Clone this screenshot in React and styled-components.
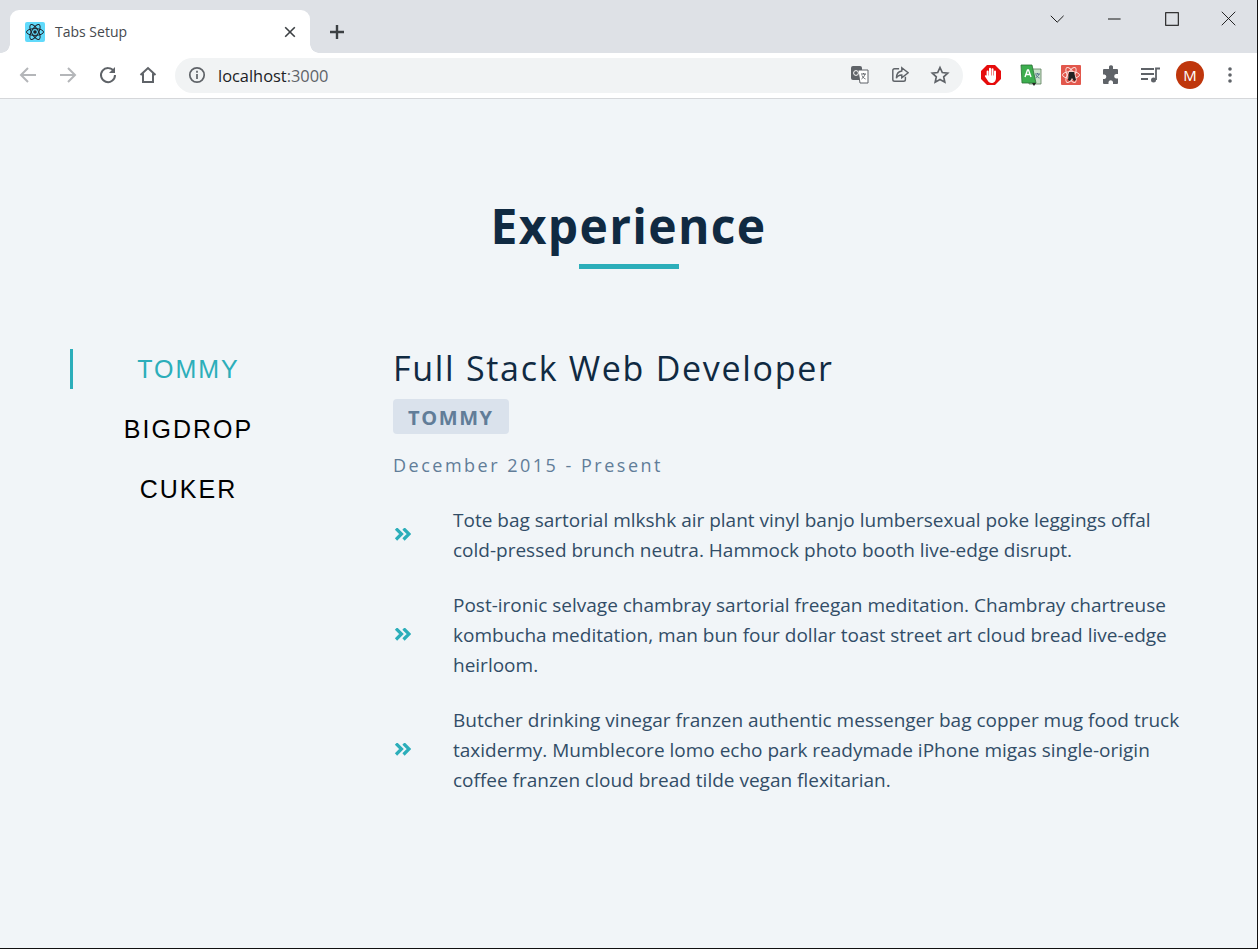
import React from 'react';
import styled, { createGlobalStyle } from 'styled-components';

const contentFont = '"Open Sans", "Noto Sans", sans-serif';

const GlobalStyle = createGlobalStyle`
  html, body {
    margin: 0;
    padding: 0;
    background: #f1f5f8;
  }
  * {
    box-sizing: border-box;
  }
`;

const Page = styled.div`
  height: 949px;
  display: flex;
  flex-direction: column;
  background: #f1f5f8;
  border-bottom: 1px solid #111;
  border-right: 1px solid #111;
  overflow: hidden;
`;

/* browser chrome */
const TabStrip = styled.div`
  height: 53px;
  flex: none;
  display: flex;
  align-items: flex-start;
  background: #dee1e6;
  padding: 10px 0 0 10px;
`;
const BrowserTab = styled.div`
  position: relative;
  width: 300px;
  height: 43px;
  display: flex;
  align-items: center;
  padding: 0 12px 0 15px;
  background: #fff;
  border-radius: 9px 9px 0 0;
  &::before,
  &::after {
    content: '';
    position: absolute;
    bottom: 0;
    width: 9px;
    height: 9px;
  }
  &::before {
    left: -9px;
    background: radial-gradient(circle at 0 0, #dee1e6 8.5px, #fff 9px);
  }
  &::after {
    right: -9px;
    background: radial-gradient(circle at 100% 0, #dee1e6 8.5px, #fff 9px);
  }
`;
const TabTitle = styled.span`
  flex: 1;
  margin-left: 10px;
  font: 14px "Open Sans", sans-serif;
  color: #45494e;
`;
const NewTab = styled.div`
  width: 28px;
  height: 28px;
  margin: 8px 0 0 13px;
  display: flex;
  align-items: center;
  justify-content: center;
`;
const WindowControls = styled.div`
  margin: -10px 0 0 auto;
  display: flex;
`;
const WindowButton = styled.div`
  width: 57px;
  height: 37px;
  display: flex;
  align-items: center;
  justify-content: center;
`;
const Toolbar = styled.div`
  height: 46px;
  flex: none;
  display: flex;
  align-items: center;
  background: #fff;
  border-bottom: 1px solid #d5d7da;
  padding: 0 8px 1px 8px;
`;
const NavButton = styled.div`
  width: 40px;
  height: 28px;
  flex: none;
  display: flex;
  align-items: center;
  justify-content: center;
`;
const AvatarSlot = styled(NavButton)`
  width: 38px;
  margin-right: 1px;
`;
const Omnibox = styled.div`
  width: 788px;
  height: 35px;
  margin: 0 8px 0 7px;
  padding: 0 3px 0 13px;
  flex: none;
  display: flex;
  align-items: center;
  background: #f1f3f4;
  border-radius: 18px;
`;
const Url = styled.span`
  flex: 1;
  margin-left: 12px;
  font: 16.4px "Open Sans", sans-serif;
  color: #202124;
  span {
    color: #5f6368;
  }
`;
const OmniIcon = styled.div`
  width: 40px;
  display: flex;
  justify-content: center;
`;
const Avatar = styled.div`
  width: 28px;
  height: 28px;
  border-radius: 50%;
  background: #bf360c;
  color: #fff;
  font: 15px "Open Sans", sans-serif;
  display: flex;
  align-items: center;
  justify-content: center;
`;

/* page content */
const Section = styled.section`
  padding: 96px 70px 0;
  font-family: ${contentFont};
`;
const Title = styled.div`
  text-align: center;
  margin-bottom: 80px;
`;
const Heading = styled.h2`
  margin: 0;
  font-size: 48px;
  line-height: 62px;
  font-weight: 700;
  letter-spacing: 1.3px;
  color: #102a42;
`;
const Underline = styled.div`
  width: 100px;
  height: 5px;
  margin: 7px auto 0;
  background: #2caeba;
`;
const Columns = styled.div`
  display: grid;
  grid-template-columns: 234px 1fr;
  column-gap: 89px;
`;
const TabList = styled.div`
  display: flex;
  flex-direction: column;
  gap: 20px;
`;
const TabButton = styled.button`
  height: 40px;
  padding: 0;
  background: transparent;
  border: 0;
  border-left: 3px solid ${({ $active }) => ($active ? '#2caeba' : 'transparent')};
  font: 25px "Liberation Sans", Arial, sans-serif;
  letter-spacing: 2px;
  color: ${({ $active }) => ($active ? '#2caeba' : '#000')};
`;
const Article = styled.article`
  min-width: 0;
`;
const JobTitle = styled.h3`
  margin: 0;
  font-size: 34px;
  line-height: 38px;
  font-weight: 400;
  letter-spacing: 1.7px;
  color: #102a42;
`;
const Company = styled.h4`
  display: inline-block;
  margin: 12px 0 0;
  padding: 0 15px;
  height: 35px;
  line-height: 37px;
  font-size: 20px;
  font-weight: 700;
  letter-spacing: 1.6px;
  color: #617d98;
  background: #dae2ec;
  border-radius: 4px;
`;
const Dates = styled.p`
  margin: 16px 0 0;
  font-size: 18px;
  line-height: 30px;
  letter-spacing: 2.5px;
  color: #617d98;
`;
const Duties = styled.div`
  margin-top: 25px;
  display: flex;
  flex-direction: column;
  gap: 25px;
`;
const Duty = styled.div`
  display: grid;
  grid-template-columns: 60px 1fr;
  align-items: center;
`;
const DutyText = styled.p`
  margin: 0;
  font-size: 19px;
  line-height: 30px;
  color: #324d67;
`;

const ReactFavicon = () => (
  <svg width="20" height="20" viewBox="0 0 20 20">
    <rect width="20" height="20" rx="2" fill="#61dafb" />
    <g fill="none" stroke="#20232a" strokeWidth="1">
      <ellipse cx="10" cy="10" rx="8.5" ry="3.4" />
      <ellipse cx="10" cy="10" rx="8.5" ry="3.4" transform="rotate(60 10 10)" />
      <ellipse cx="10" cy="10" rx="8.5" ry="3.4" transform="rotate(120 10 10)" />
    </g>
    <circle cx="10" cy="10" r="1.8" fill="#20232a" />
  </svg>
);

const DoubleChevron = () => (
  <svg width="18" height="14" viewBox="0 0 18 14" fill="none" stroke="#2caeba" strokeWidth="3.2">
    <path d="M3 .5L8.500 6 3 11.500M10.500 .5L16 6l-5.500 5.500" />
  </svg>
);

const Glyph = ({ size = 20, color = '#5f6368', width = 2, children }) => (
  <svg width={size} height={size} viewBox="0 0 20 20" fill="none" stroke={color} strokeWidth={width}>
    {children}
  </svg>
);

const duties = [
  'Tote bag sartorial mlkshk air plant vinyl banjo lumbersexual poke leggings offal cold-pressed brunch neutra. Hammock photo booth live-edge disrupt.',
  'Post-ironic selvage chambray sartorial freegan meditation. Chambray chartreuse kombucha meditation, man bun four dollar toast street art cloud bread live-edge heirloom.',
  'Butcher drinking vinegar franzen authentic messenger bag copper mug food truck taxidermy. Mumblecore lomo echo park readymade iPhone migas single-origin coffee franzen cloud bread tilde vegan flexitarian.',
];

const App = () => (
  <Page>
    <GlobalStyle />
    <TabStrip>
      <BrowserTab>
        <ReactFavicon />
        <TabTitle>Tabs Setup</TabTitle>
        <Glyph size={16} color="#3c4043">
          <path d="M4 4l12 12M16 4L4 16" />
        </Glyph>
      </BrowserTab>
      <NewTab>
        <Glyph color="#3c4043" width={2.4}>
          <path d="M10 3v14M3 10h14" />
        </Glyph>
      </NewTab>
      <WindowControls>
        <WindowButton>
          <Glyph size={16} color="#111" width={1.2}>
            <path d="M1 6l8 8 8-8" />
          </Glyph>
        </WindowButton>
        <WindowButton>
          <Glyph size={14} color="#111" width={1.4}>
            <path d="M0 10h18" />
          </Glyph>
        </WindowButton>
        <WindowButton>
          <Glyph size={14} color="#111" width={1.5}>
            <rect x="1" y="1" width="18" height="18" />
          </Glyph>
        </WindowButton>
        <WindowButton>
          <Glyph size={15} color="#111" width={1.2}>
            <path d="M1 1l18 18M19 1L1 19" />
          </Glyph>
        </WindowButton>
      </WindowControls>
    </TabStrip>
    <Toolbar>
      <NavButton>
        <Glyph color="#b4b6b9">
          <path d="M18 10H3M10 3l-7 7 7 7" />
        </Glyph>
      </NavButton>
      <NavButton>
        <Glyph color="#b4b6b9">
          <path d="M2 10h15M10 3l7 7-7 7" />
        </Glyph>
      </NavButton>
      <NavButton>
        <Glyph>
          <path d="M16 6.500A7 7 0 1 0 17 10" />
          <path d="M17 2v6h-6" fill="#5f6368" stroke="none" />
        </Glyph>
      </NavButton>
      <NavButton>
        <Glyph>
          <path d="M2.500 10L10 3l7.500 7M5 8.500V17h10V8.500" />
        </Glyph>
      </NavButton>
      <Omnibox>
        <Glyph size={18} width={1.9}>
          <circle cx="10" cy="10" r="8" />
          <path d="M10 9v5.500M10 5.200v2.200" />
        </Glyph>
        <Url>
          localhost<span>:3000</span>
        </Url>
        <OmniIcon>
          <svg width="20" height="20" viewBox="0 0 20 20">
            <rect x="1" y="1" width="11" height="14" rx="2" fill="#5f6368" />
            <path d="M8 5h10v13H10z" fill="#fff" stroke="#5f6368" />
            <path d="M11 9h5M13.500 8v1M15 9c-.5 2-2 4-3.500 5M12 10.500c.7 1.500 2 3 3.500 3.500" stroke="#5f6368" fill="none" />
            <circle cx="6" cy="8" r="2.400" fill="none" stroke="#fff" />
          </svg>
        </OmniIcon>
        <OmniIcon>
          <Glyph size={18} width={1.6}>
            <path d="M9 3H4a2 2 0 0 0-2 2v10a2 2 0 0 0 2 2h10a2 2 0 0 0 2-2v-3" />
            <path d="M12 2l7 5.500-7 5.500V10c-3 0-5 1-6 3.500C6 9 8 6 12 5.500z" />
          </Glyph>
        </OmniIcon>
        <OmniIcon>
          <Glyph size={20} width={1.7}>
            <path d="M10 2.500l2.300 5 5.400.6-4 3.700 1.100 5.400L10 14.500l-4.800 2.700 1.100-5.400-4-3.700 5.400-.6z" />
          </Glyph>
        </OmniIcon>
      </Omnibox>
      <NavButton>
        <svg width="22" height="22" viewBox="0 0 22 22">
          <path d="M7 1h8l6 6v8l-6 6H7l-6-6V7z" fill="#e60c0c" />
          <path d="M6.500 11.500h9.500V14c0 3-2 5-4.500 5-2 0-3-1-4-2.800L5 12.500c-.6-1 .8-1.800 1.500-1z" fill="#fff" />
          <path d="M7.600 12V7.500M10 12V4.800M12.500 12V5.300M15 12.500V7.500" stroke="#fff" strokeWidth="2" strokeLinecap="round" />
        </svg>
      </NavButton>
      <NavButton>
        <svg width="22" height="22" viewBox="0 0 22 22">
          <path d="M9 5h12v15H9z" fill="#c8e0c8" stroke="#5a7d5a" strokeWidth="0.8" />
          <path d="M1 1h11l4 18H2z" fill="#3cae4e" stroke="#2a6f35" strokeWidth="0.8" />
          <path d="M12 19l2 3 2-3z" fill="#222" />
          <path d="M5 13l2.500-7h1L11 13M6 10.500h4" stroke="#fff" strokeWidth="1.400" fill="none" />
          <path d="M15 10h5M17.500 9v1M19 10c-.5 2-2 3-3.500 4M16 11c.7 1.500 2 2.500 3.500 3" stroke="#55708a" fill="none" />
        </svg>
      </NavButton>
      <NavButton>
        <svg width="20" height="20" viewBox="0 0 20 20">
          <rect width="20" height="20" rx="1" fill="#e2574c" />
          <g fill="none" stroke="#fbdcd8" strokeWidth="1">
            <ellipse cx="10" cy="10" rx="8.500" ry="3.400" />
            <ellipse cx="10" cy="10" rx="8.500" ry="3.400" transform="rotate(60 10 10)" />
            <ellipse cx="10" cy="10" rx="8.500" ry="3.400" transform="rotate(120 10 10)" />
          </g>
          <path d="M8 7h5l2 8-2 1-2-3-2 3-2-1z" fill="#222" />
        </svg>
      </NavButton>
      <NavButton>
        <svg width="20" height="20" viewBox="0 0 20 20">
          <path
            d="M8 1.500a2.200 2.200 0 0 1 4 0V4h4a1 1 0 0 1 1 1v4h-2a2.300 2.300 0 0 0 0 4.500h2V18a1 1 0 0 1-1 1h-4v-2a2.300 2.300 0 0 0-4.500 0v2H3a1 1 0 0 1-1-1v-4h1.500a2.300 2.300 0 0 0 0-4.500H2V5a1 1 0 0 1 1-1h5z"
            fill="#5f6368"
          />
        </svg>
      </NavButton>
      <NavButton>
        <svg width="20" height="20" viewBox="0 0 20 20" fill="none" stroke="#5f6368" strokeWidth="1.800">
          <path d="M0 4h13M0 9h13M0 14h7" />
          <path d="M15 15V3.500h4" />
          <circle cx="12.500" cy="15" r="2.500" fill="#5f6368" stroke="none" />
        </svg>
      </NavButton>
      <AvatarSlot>
        <Avatar>M</Avatar>
      </AvatarSlot>
      <NavButton>
        <svg width="4" height="16" viewBox="0 0 4 16" fill="#5f6368">
          <circle cx="2" cy="2" r="1.800" />
          <circle cx="2" cy="8" r="1.800" />
          <circle cx="2" cy="14" r="1.800" />
        </svg>
      </NavButton>
    </Toolbar>
    <Section>
      <Title>
        <Heading>Experience</Heading>
        <Underline />
      </Title>
      <Columns>
        <TabList>
          <TabButton $active>TOMMY</TabButton>
          <TabButton>BIGDROP</TabButton>
          <TabButton>CUKER</TabButton>
        </TabList>
        <Article>
          <JobTitle>Full Stack Web Developer</JobTitle>
          <Company>TOMMY</Company>
          <Dates>December 2015 - Present</Dates>
          <Duties>
            {duties.map((duty, i) => (
              <Duty key={i}>
                <DoubleChevron />
                <DutyText>{duty}</DutyText>
              </Duty>
            ))}
          </Duties>
        </Article>
      </Columns>
    </Section>
  </Page>
);

export default App;
